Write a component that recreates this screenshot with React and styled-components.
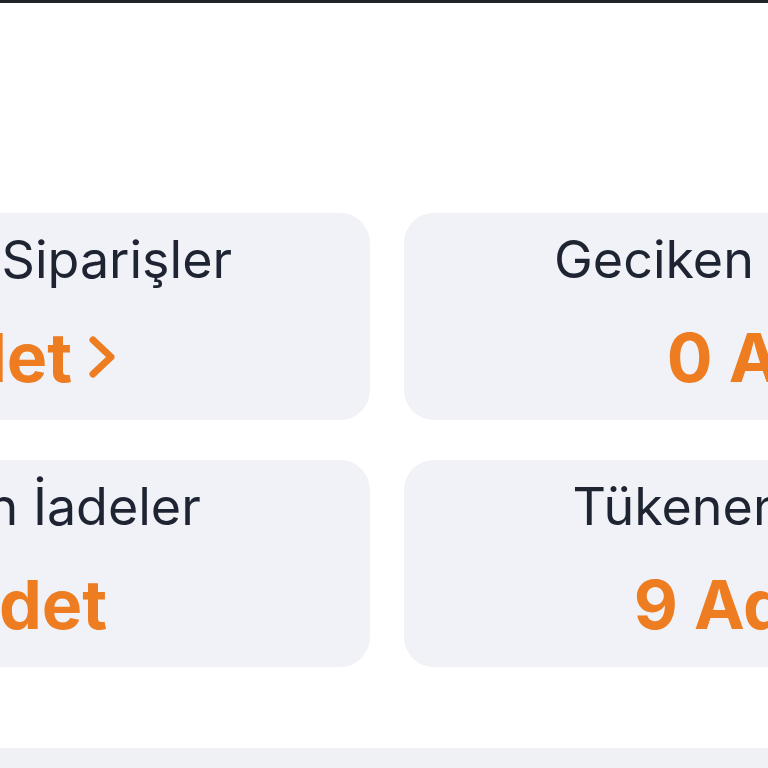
import React from 'react';
import styled, { createGlobalStyle } from 'styled-components';

const GlobalStyle = createGlobalStyle`
    html, body {
        margin: 0;
        padding: 0;
        background: #ffffff;
        overflow: hidden;
    }
    body {
        font-family: Inter, "Noto Sans", "Liberation Sans", sans-serif;
    }
`;

const Page = styled.div`
    width: 768px;
    height: 768px;
    display: flex;
    flex-direction: column;
    overflow: hidden;
    background: #ffffff;
`;

const TopBar = styled.div`
    height: 3px;
    flex-shrink: 0;
    background: #202328;
`;

const Content = styled.div`
    flex: 1;
    padding-top: 210px;
`;

const StatGrid = styled.div`
    display: grid;
    grid-template-columns: 745px 745px;
    column-gap: 34px;
    row-gap: 40px;
    margin-left: -375px;
    width: 1524px;
`;

const StatCard = styled.div`
    background: #f0f2f7;
    border-radius: 30px;
    padding: 16px 0 22px;
    display: flex;
    flex-direction: column;
    align-items: center;
`;

const StatTitle = styled.p`
    margin: 0;
    font-size: 52px;
    line-height: 62px;
    font-weight: 400;
    color: #1f2432;
    white-space: nowrap;
`;

const StatValue = styled.div`
    margin-top: 25px;
    padding-right: ${(p) => (p.$link ? '24px' : '0')};
    display: flex;
    align-items: center;
    gap: 17px;
    font-size: 68px;
    line-height: 82px;
    font-weight: 700;
    color: #ee7d22;
    white-space: nowrap;
`;

const Chevron = styled.svg`
    width: 27px;
    height: 42px;
    flex-shrink: 0;
`;

const BottomBand = styled.div`
    height: 20px;
    flex-shrink: 0;
    background: #f0f1f5;
`;

const stats = [
    { title: 'Bekleyen Siparişler', value: '3 Adet', link: true },
    { title: 'Geciken Siparişler', value: '0 Adet', link: false },
    { title: 'Bekleyen İadeler', value: '0 Adet', link: false },
    { title: 'Tükenen Ürünler', value: '9 Adet', link: true },
];

const ChevronIcon = () => (
    <Chevron viewBox="0 0 27 42" fill="none">
        <path d="M4 4 L22 21 L4 38" stroke="#ee7d22" strokeWidth="7" strokeLinecap="round" strokeLinejoin="round" />
    </Chevron>
);

export default function App() {
    return (
        <Page>
            <GlobalStyle />
            <TopBar />
            <Content>
                <StatGrid>
                    {stats.map((s) => (
                        <StatCard key={s.title}>
                            <StatTitle>{s.title}</StatTitle>
                            <StatValue $link={s.link}>
                                {s.value}
                                {s.link && <ChevronIcon />}
                            </StatValue>
                        </StatCard>
                    ))}
                </StatGrid>
            </Content>
            <BottomBand />
        </Page>
    );
}
